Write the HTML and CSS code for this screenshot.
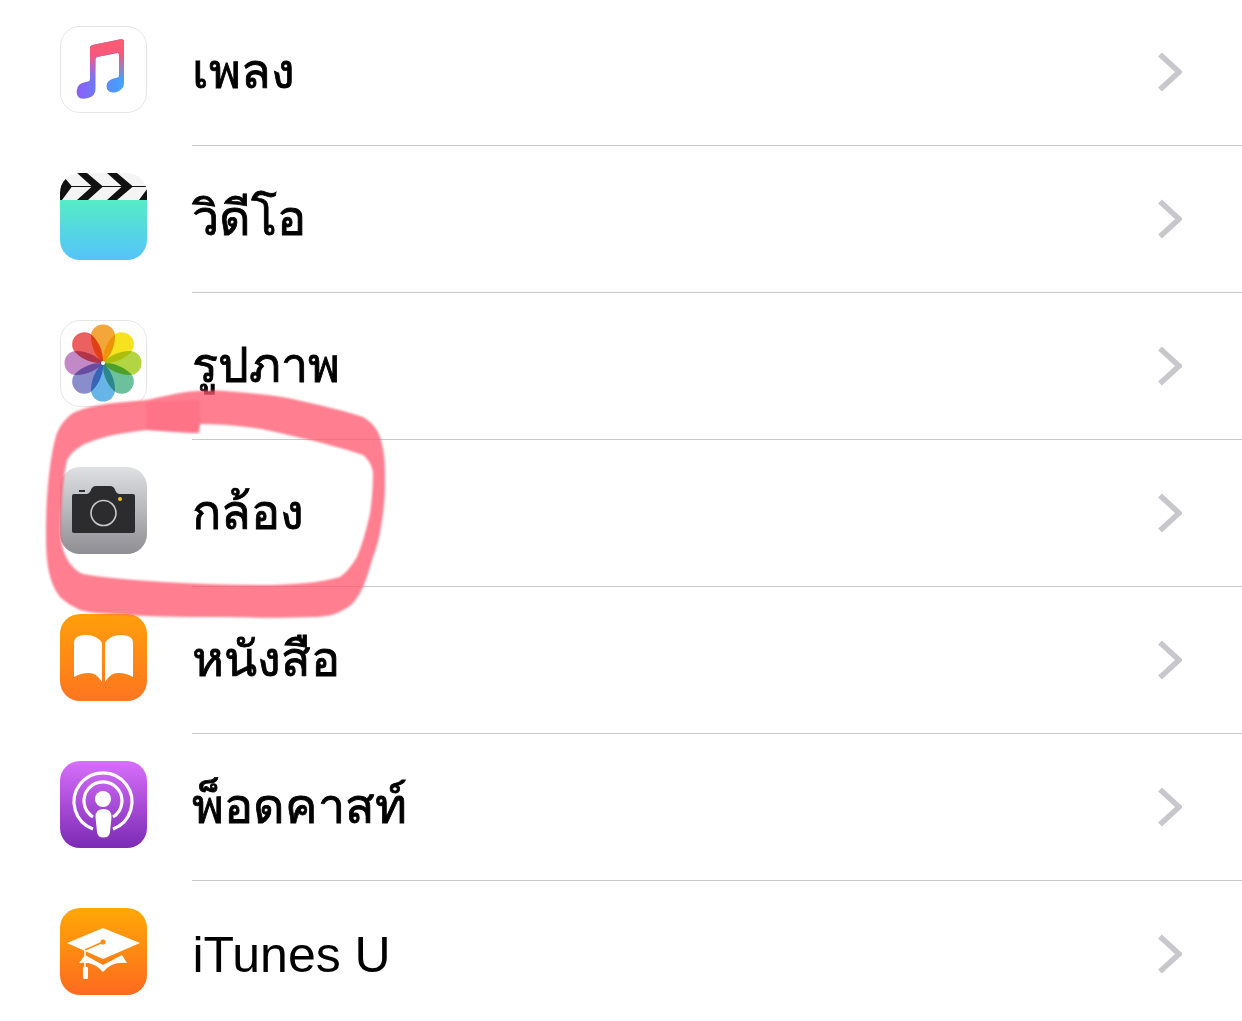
FILE: index.html
```html
<!DOCTYPE html>
<html lang="th">

<head>
    <title>การตั้งค่า</title>
    <meta charset="utf-8" />
    <link rel="stylesheet" href="styles.css">
</head>

<body>
    <ul class="list">
        <li class="row">
            <svg class="icon" viewBox="0 0 87 87">
                <defs>
                    <linearGradient id="note_base" x1="16" y1="0" x2="64" y2="0" gradientUnits="userSpaceOnUse">
                        <stop offset="0" stop-color="#8e5cf8" />
                        <stop offset="1" stop-color="#3fa6fb" />
                    </linearGradient>
                    <linearGradient id="note_top" x1="0" y1="18" x2="0" y2="54" gradientUnits="userSpaceOnUse">
                        <stop offset="0" stop-color="#fb5b72" />
                        <stop offset=".3" stop-color="#f8577c" />
                        <stop offset="1" stop-color="#e8609c" stop-opacity="0" />
                    </linearGradient>
                </defs>
                <rect x=".5" y=".5" width="86" height="86" rx="19.5" fill="#fff" stroke="#e6e6e6" />
                <path d="M30 21.5 Q30 19.5 32.5 19 L60.5 13.3 Q64 12.8 64 15.5 V57 Q64 63 57 66 Q50 68 47 63 Q45 56 52 53 L57.5 51.5 Q59 51 59 49 V28.5 Q59 26.8 57.5 27 L37 31 Q35.5 31.5 35.5 33.5 V63 Q35.5 70 28 72 Q19 74.5 17 68.5 Q15.5 60 22 57 L28 55.5 Q30 55 30 53 Z" fill="url(#note_base)" />
                <path d="M30 21.5 Q30 19.5 32.5 19 L60.5 13.3 Q64 12.8 64 15.5 V56 H59 V28.5 Q59 26.8 57.5 27 L37 31 Q35.5 31.5 35.5 33.5 V56 H30 Z" fill="url(#note_top)" />
            </svg>
            <div class="row-main"><span class="label">เพลง</span><svg class="chevron" viewBox="0 0 24 40"><path d="M2 2.5 L21 20 L2 37.5" /></svg></div>
        </li>
        <li class="row">
            <svg class="icon" viewBox="0 0 87 87">
                <defs>
                    <linearGradient id="video_bg" x1="0" y1="0" x2="0" y2="1">
                        <stop offset="0" stop-color="#55ecc6" />
                        <stop offset="1" stop-color="#55c3fb" />
                    </linearGradient>
                    <clipPath id="video_clip"><rect width="87" height="87" rx="20" /></clipPath>
                </defs>
                <g clip-path="url(#video_clip)">
                    <rect y="27" width="87" height="60" fill="url(#video_bg)" />
                    <rect width="87" height="27" fill="#f4f4f4" />
                    <path d="M17 0 H27 L43 13.5 L28 27 H17 L32 13.5 Z M47 0 H57 L73 13.5 L57 27 H47 L62 13.5 Z M0 6 L4 4 L12 13.5 L2 27 H0 Z M87 16 V27 H79 Z" fill="#111" />
                    <rect y="13" width="87" height="1" fill="#111" />
                </g>
            </svg>
            <div class="row-main"><span class="label">วิดีโอ</span><svg class="chevron" viewBox="0 0 24 40"><path d="M2 2.5 L21 20 L2 37.5" /></svg></div>
        </li>
        <li class="row">
            <svg class="icon" viewBox="0 0 87 87">
                <defs>
                    <path id="petal" d="M0 0 C-6 -5 -12 -15 -12 -27 A12 11.5 0 0 1 12 -27 C12 -15 6 -5 0 0 Z" />
                </defs>
                <rect x=".5" y=".5" width="86" height="86" rx="19.5" fill="#fff" stroke="#e6e6e6" />
                <g class="petals" transform="translate(43 43)">
                    <use href="#petal" fill="#f5a63a" />
                    <use href="#petal" fill="#f6e21f" transform="rotate(45)" />
                    <use href="#petal" fill="#b3d544" transform="rotate(90)" />
                    <use href="#petal" fill="#6cc09b" transform="rotate(135)" />
                    <use href="#petal" fill="#67b4e6" transform="rotate(180)" />
                    <use href="#petal" fill="#8a8dcc" transform="rotate(225)" />
                    <use href="#petal" fill="#c189c5" transform="rotate(270)" />
                    <use href="#petal" fill="#ea6160" transform="rotate(315)" />
                </g>
                <circle cx="43" cy="43" r="2" fill="#fff" />
            </svg>
            <div class="row-main"><span class="label">รูปภาพ</span><svg class="chevron" viewBox="0 0 24 40"><path d="M2 2.5 L21 20 L2 37.5" /></svg></div>
        </li>
        <li class="row">
            <svg class="icon" viewBox="0 0 87 87">
                <defs>
                    <linearGradient id="camera_bg" x1="0" y1="0" x2="0" y2="1">
                        <stop offset="0" stop-color="#dfe0e4" />
                        <stop offset="1" stop-color="#8e8e93" />
                    </linearGradient>
                </defs>
                <rect width="87" height="87" rx="20" fill="url(#camera_bg)" />
                <path d="M14 27 H27 Q29 27 30.5 24 Q32 19 36 19 H50 Q54 19 55.5 24 Q57 27 59 27 H73 Q75 27 75 29 V64 Q75 66 73 66 H14 Q12 66 12 64 V29 Q12 27 14 27 Z" fill="#2c2c2e" />
                <rect x="19" y="23" width="6" height="2" fill="#2c2c2e" />
                <circle cx="43.5" cy="46" r="12.5" fill="none" stroke="#c9c9cb" stroke-width="1.6" />
                <circle cx="60" cy="32" r="2" fill="#f5c518" />
            </svg>
            <div class="row-main"><span class="label">กล้อง</span><svg class="chevron" viewBox="0 0 24 40"><path d="M2 2.5 L21 20 L2 37.5" /></svg></div>
        </li>
        <li class="row">
            <svg class="icon" viewBox="0 0 87 87">
                <defs>
                    <linearGradient id="books_bg" x1="0" y1="0" x2="0" y2="1">
                        <stop offset="0" stop-color="#ff9f0a" />
                        <stop offset="1" stop-color="#fd7520" />
                    </linearGradient>
                </defs>
                <rect width="87" height="87" rx="20" fill="url(#books_bg)" />
                <path d="M14 63 V29 Q14 21 26 21 Q37 21 42 29 V68 Q36 58 28 59 Q21 59 14 63 Z M73 63 V29 Q73 21 61 21 Q50 21 45 29 V68 Q51 58 59 59 Q66 59 73 63 Z" fill="#fff" />
            </svg>
            <div class="row-main"><span class="label">หนังสือ</span><svg class="chevron" viewBox="0 0 24 40"><path d="M2 2.5 L21 20 L2 37.5" /></svg></div>
        </li>
        <li class="row">
            <svg class="icon" viewBox="0 0 87 87">
                <defs>
                    <linearGradient id="podcast_bg" x1="0" y1="0" x2="0" y2="1">
                        <stop offset="0" stop-color="#d76ffa" />
                        <stop offset="1" stop-color="#7b2ab5" />
                    </linearGradient>
                </defs>
                <rect width="87" height="87" rx="20" fill="url(#podcast_bg)" />
                <path d="M33 68 A29 29 0 1 1 53 68 M33 56 A19 19 0 1 1 53 56" fill="none" stroke="#fff" stroke-width="3.2" />
                <circle cx="43" cy="38" r="8" fill="#fff" />
                <path d="M35.5 56 Q35.5 48 43.5 48 Q51.5 48 51.5 56 L50 71 Q49.5 76.5 43.5 76.5 Q37.5 76.5 37 71 Z" fill="#fff" />
            </svg>
            <div class="row-main"><span class="label">พ็อดคาสท์</span><svg class="chevron" viewBox="0 0 24 40"><path d="M2 2.5 L21 20 L2 37.5" /></svg></div>
        </li>
        <li class="row">
            <svg class="icon" viewBox="0 0 87 87">
                <defs>
                    <linearGradient id="itunes_bg" x1="0" y1="0" x2="0" y2="1">
                        <stop offset="0" stop-color="#ffa805" />
                        <stop offset="1" stop-color="#fd6a1f" />
                    </linearGradient>
                </defs>
                <rect width="87" height="87" rx="20" fill="url(#itunes_bg)" />
                <path d="M7 35 L43 20 L80 35 L43 51 Z" fill="#fff" />
                <path d="M19 55 L25 47 L43 57 L62 47 L67 55 Q52 53 43 64 Q34 53 19 55 Z" fill="#fff" />
                <path d="M43 34 L25 42" fill="none" stroke="#fd8f10" stroke-width="1.5" />
                <path d="M25 42 V60" stroke="#fff" stroke-width="1.5" />
                <circle cx="43" cy="34" r="2.6" fill="#fd8f10" />
                <rect x="23" y="59" width="5" height="12" rx="1" fill="#fff" />
            </svg>
            <div class="row-main"><span class="label label-latin">iTunes U</span><svg class="chevron" viewBox="0 0 24 40"><path d="M2 2.5 L21 20 L2 37.5" /></svg></div>
        </li>
    </ul>

    <svg class="scribble" viewBox="0 0 1242 1021">
        <path fill-rule="evenodd" d="M147 400 C165 396 180 392 197 391 C215 390 225 391 237 392 C260 394 280 396 297 400 C320 405 345 411 363 417 C372 422 378 430 380 437 C384 450 385 460 385 473 C385 490 385 500 383 513 C381 530 378 545 373 557 C369 570 365 585 360 593 C355 602 350 607 343 610 C335 615 325 617 313 617 C285 618 260 618 230 617 C195 617 160 617 130 615 C110 614 92 613 80 610 C72 606 65 602 60 597 C53 588 50 578 48 567 C46 555 46 545 46 533 C46 510 47 490 50 467 C52 452 54 442 57 433 C61 424 66 418 73 413 C85 407 100 405 113 403 C125 402 135 401 147 400 Z M87 443 C78 447 71 453 67 460 C64 472 63 486 62 500 C61 515 60 528 61 540 C63 552 67 561 73 567 C77 571 80 573 83 574 C105 578 135 580 163 582 C195 584 230 585 263 585 C290 585 320 583 340 577 C347 572 352 565 357 557 C362 545 367 528 370 513 C372 500 373 486 373 473 C372 465 368 459 363 455 C345 449 320 442 297 437 C280 433 265 429 247 427 C232 425 215 424 200 424 L198 433 C180 433 165 431 147 430 C135 431 125 433 113 435 C103 437 95 440 87 443 Z" />
        <path class="scribble-patch" d="M146 402 L200 400 L200 433 L146 430 Z" />
    </svg>
</body>

</html>
```
FILE: styles.css
```css
html, body {
    margin: 0;
    height: 100%;
}
body {
    position: relative;
    overflow: hidden;
    background-color: #fff;
    font-family: 'Liberation Sans', 'Noto Sans', 'DejaVu Sans', sans-serif;
}
.list {
    list-style: none;
    margin: -1px 0 0;
    padding: 0;
}
.row {
    display: flex;
    align-items: center;
    height: 147px;
}
.icon {
    flex: none;
    width: 87px;
    height: 87px;
    margin: 0 45px 7px 60px;
}
.row-main {
    flex: 1;
    display: flex;
    align-items: center;
    justify-content: space-between;
    box-sizing: border-box;
    height: 147px;
    padding-right: 59px;
    border-bottom: 1px solid #c8c7cc;
}
.label {
    margin-bottom: 4px;
    font-size: 48.6px;
    color: #000;
    -webkit-text-stroke: .8px #000;
}
.label-latin {
    margin: 2px 0 0 .5px;
    font-size: 50px;
    -webkit-text-stroke: 0;
}
.chevron {
    width: 24px;
    height: 40px;
    margin-right: 1px;
}
.chevron path {
    fill: none;
    stroke: #c7c7cc;
    stroke-width: 5.5;
}
.petals use {
    mix-blend-mode: multiply;
}
.scribble {
    position: absolute;
    top: 0;
    left: 0;
    width: 1242px;
    height: 1021px;
    fill: #ff5a70;
    opacity: .78;
    filter: blur(.8px);
}
.scribble-patch {
    fill: #ff3f5a;
    opacity: .45;
}
```
